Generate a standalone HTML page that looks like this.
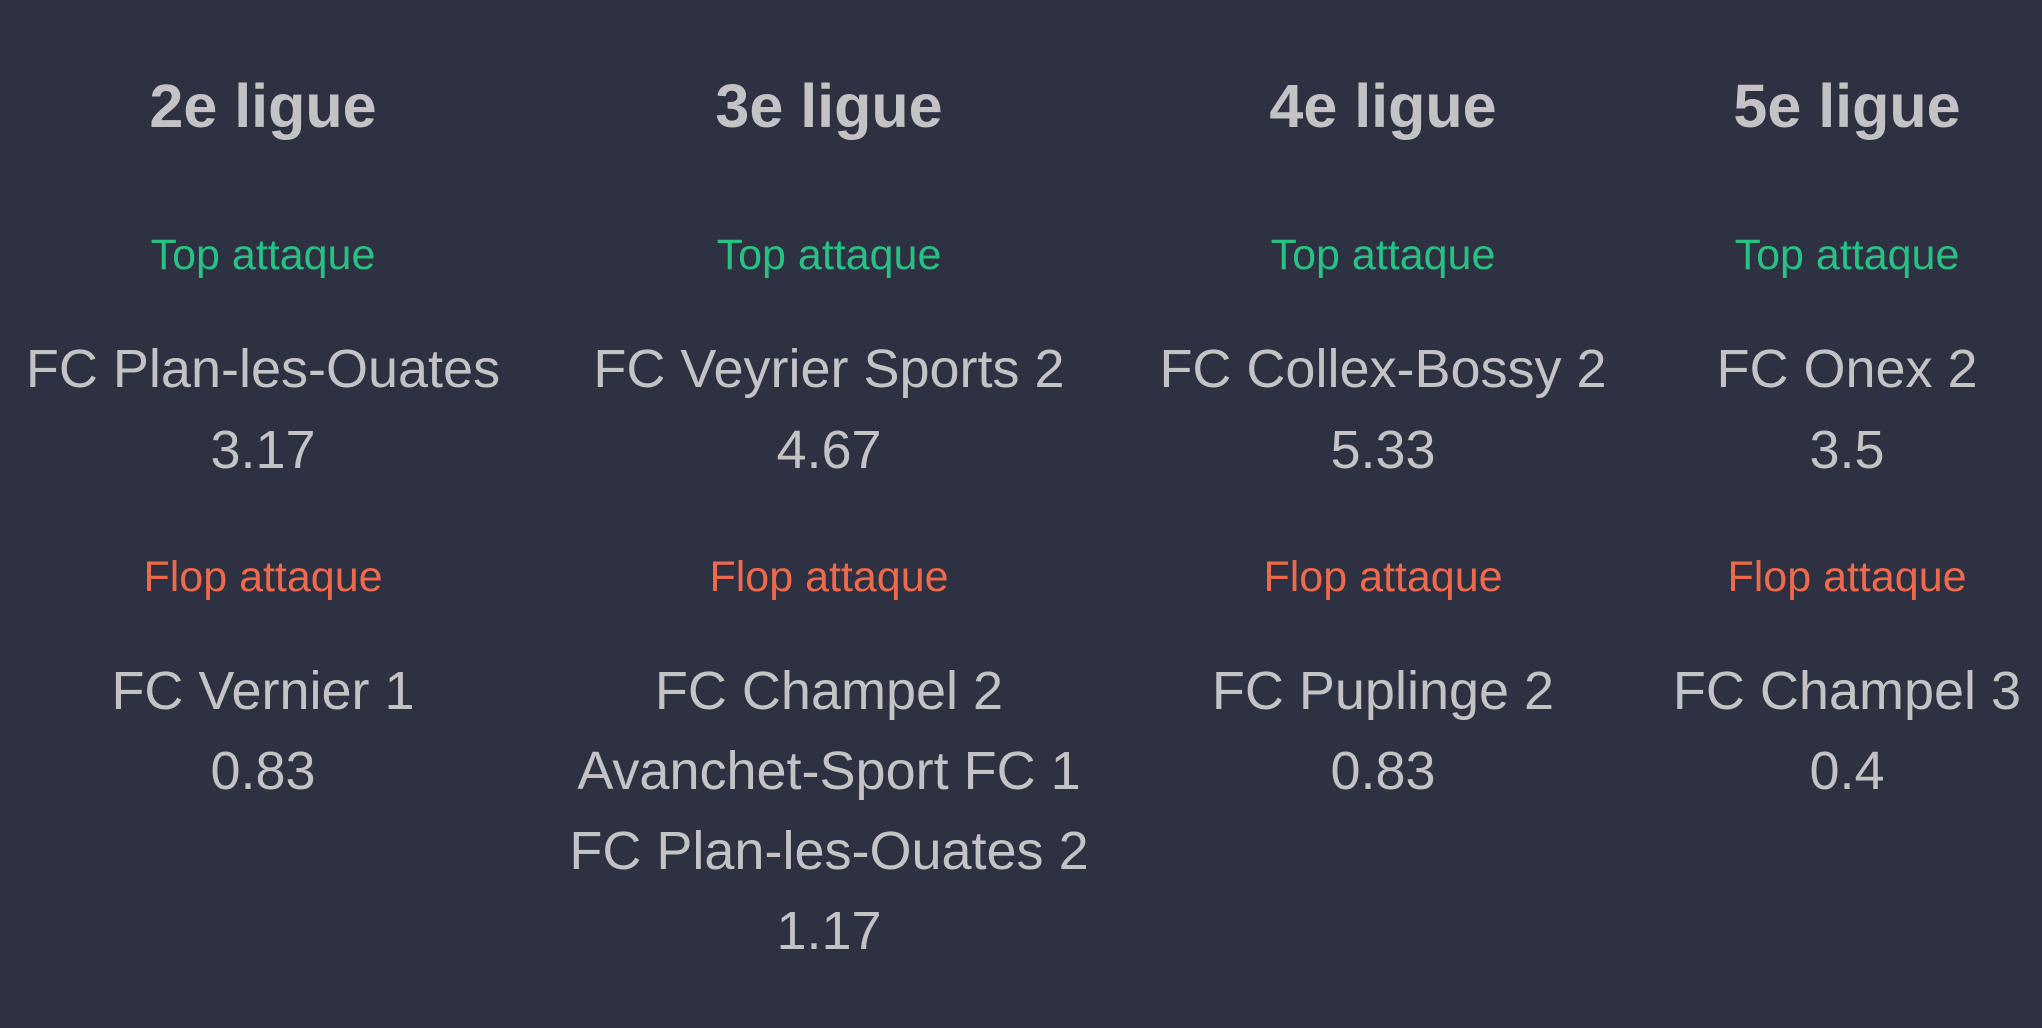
<!DOCTYPE html>
<html><head><meta charset="utf-8"><style>
html,body{margin:0;padding:0;}
body{width:2042px;height:1028px;background:#2e3141;position:relative;overflow:hidden;font-family:"Liberation Sans",sans-serif;color:#c3c3c6;}
.t{position:absolute;white-space:nowrap;transform:translateX(-50%);line-height:1;}
.h{font-size:61px;font-weight:bold;}
.g{font-size:43px;color:#27c283;}
.r{font-size:43px;color:#ef6a4c;}
.n{font-size:54px;}
</style></head><body>
<div class="t h" style="left:263px;top:76px">2e ligue</div>
<div class="t h" style="left:829px;top:76px">3e ligue</div>
<div class="t h" style="left:1383px;top:76px">4e ligue</div>
<div class="t h" style="left:1847px;top:76px">5e ligue</div>

<div class="t g" style="left:263px;top:234px">Top attaque</div>
<div class="t g" style="left:829px;top:234px">Top attaque</div>
<div class="t g" style="left:1383px;top:234px">Top attaque</div>
<div class="t g" style="left:1847px;top:234px">Top attaque</div>

<div class="t n" style="left:263px;top:342px">FC Plan-les-Ouates</div>
<div class="t n" style="left:263px;top:423px">3.17</div>
<div class="t n" style="left:829px;top:342px">FC Veyrier Sports 2</div>
<div class="t n" style="left:829px;top:423px">4.67</div>
<div class="t n" style="left:1383px;top:342px">FC Collex-Bossy 2</div>
<div class="t n" style="left:1383px;top:423px">5.33</div>
<div class="t n" style="left:1847px;top:342px">FC Onex 2</div>
<div class="t n" style="left:1847px;top:423px">3.5</div>

<div class="t r" style="left:263px;top:556px">Flop attaque</div>
<div class="t r" style="left:829px;top:556px">Flop attaque</div>
<div class="t r" style="left:1383px;top:556px">Flop attaque</div>
<div class="t r" style="left:1847px;top:556px">Flop attaque</div>

<div class="t n" style="left:263px;top:664px">FC Vernier 1</div>
<div class="t n" style="left:263px;top:744px">0.83</div>
<div class="t n" style="left:829px;top:664px">FC Champel 2</div>
<div class="t n" style="left:829px;top:744px">Avanchet-Sport FC 1</div>
<div class="t n" style="left:829px;top:824px">FC Plan-les-Ouates 2</div>
<div class="t n" style="left:829px;top:904px">1.17</div>
<div class="t n" style="left:1383px;top:664px">FC Puplinge 2</div>
<div class="t n" style="left:1383px;top:744px">0.83</div>
<div class="t n" style="left:1847px;top:664px">FC Champel 3</div>
<div class="t n" style="left:1847px;top:744px">0.4</div>
</body></html>
